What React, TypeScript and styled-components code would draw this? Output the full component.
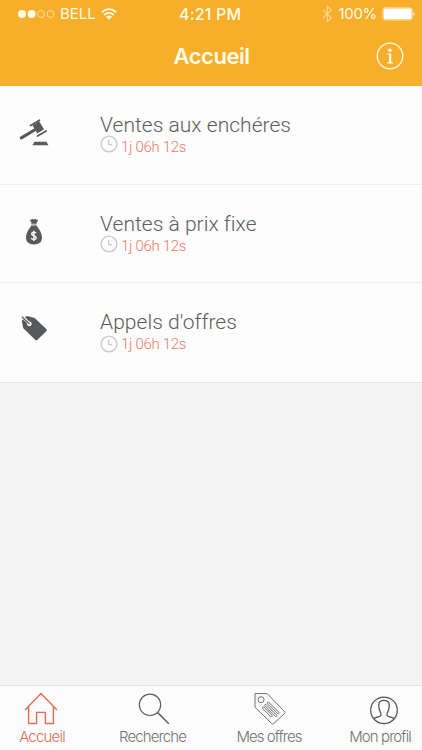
import React from 'react';
import styled, { createGlobalStyle } from 'styled-components';

const GlobalStyle = createGlobalStyle`
  * { box-sizing: border-box; }
  body { margin: 0; background: #f4f4f4; }
  svg { display: block; }
`;

const Screen = styled.div`
  width: 422px;
  height: 750px;
  display: flex;
  flex-direction: column;
  overflow: hidden;
  background: #f4f4f4;
  font-family: Roboto, sans-serif;
`;

const Header = styled.header`
  height: 86px;
  flex: none;
  background: #f6ae2b;
  color: #fffbe6;
  font-family: Inter, "Liberation Sans", sans-serif;
`;

const StatusBar = styled.div`
  height: 28px;
  display: grid;
  grid-template-columns: 1fr 64px 1fr;
  align-items: center;
  padding: 0 6px 0 18px;
  font-size: 15px;
  line-height: 28px;
  white-space: nowrap;
`;

const StatusGroup = styled.div<{ $end?: boolean }>`
  display: flex;
  align-items: center;
  justify-content: ${p => (p.$end ? 'flex-end' : 'flex-start')};
  gap: 5px;
`;

const StatusText = styled.span<{ $spacing: number; $weight?: number }>`
  letter-spacing: ${p => p.$spacing}px;
  font-weight: ${p => p.$weight ?? 400};
`;

const StatusTime = styled(StatusText)`
  margin-left: -6px;
  font-size: 16px;
`;

const TitleBar = styled.div`
  height: 58px;
  display: grid;
  grid-template-columns: 1fr auto 1fr;
  align-items: center;
  padding: 0 18px 2px 19px;
`;

const Title = styled.h1`
  grid-column: 2;
  margin: 0;
  font: 600 22px/28px Inter, "Liberation Sans", sans-serif;
  letter-spacing: -0.45px;
`;

const InfoButton = styled.button`
  justify-self: end;
  padding: 0;
  border: 0;
  background: none;
  color: inherit;
`;

const List = styled.main`
  flex: 1;
`;

const Row = styled.article<{ $height: number }>`
  height: ${p => p.$height}px;
  padding-top: 27px;
  display: grid;
  grid-template-columns: 100px 1fr;
  background: #fdfdfd;
  border-bottom: 1px solid #f0f0f0;
  &:last-child { border-color: #e6e6e6; }
`;

const RowIcon = styled.div<{ $top: number }>`
  color: #58595b;
  padding: ${p => p.$top}px 0 0 16px;
`;

const RowTitle = styled.h2`
  margin: 0;
  font-size: 21px;
  font-weight: 300;
  line-height: 24px;
  letter-spacing: 0.03px;
  color: #5c5c5c;
`;

const Remaining = styled.div`
  display: flex;
  gap: 3px;
  height: 18px;
  color: #ea7c67;
  font-size: 15px;
  font-weight: 350;
  letter-spacing: -0.32px;
  line-height: 18px;
`;

const Duration = styled.span<{ $top: number }>`
  margin-top: ${p => p.$top}px;
`;

const ClockSlot = styled.span<{ $top: number }>`
  margin-top: ${p => p.$top}px;
`;

const TabBar = styled.nav`
  height: 65px;
  flex: none;
  display: grid;
  grid-template-columns: 84px 137px 96px 105px;
  background: #fcfcfc;
  border-top: 1px solid #e4e4e4;
`;

const Tab = styled.button<{ $active?: boolean; $spacing: number; $nudge: number }>`
  display: flex;
  flex-direction: column;
  align-items: center;
  border: 0;
  padding: 4px 0 0 ${p => p.$nudge}px;
  background: none;
  color: ${p => (p.$active ? '#e26d56' : '#747474')};
  font: 300 15px/18px Inter, "Liberation Sans", sans-serif;
  letter-spacing: ${p => p.$spacing}px;
  white-space: nowrap;
`;

const TabIcon = styled.span<{ $offset: number }>`
  height: 38px;
  padding-left: ${p => Math.max(0, p.$offset) * 2}px;
  padding-right: ${p => Math.max(0, -p.$offset) * 2}px;
`;

const Signal = () => (
  <svg width="37" height="10" viewBox="0 0 37 10" fill="none" stroke="#fffbe6">
    <circle cx="4" cy="5" r="4" fill="#fffbe6" stroke="none" />
    <circle cx="13.6" cy="5" r="4" fill="#fffbe6" stroke="none" />
    <circle cx="23" cy="5" r="3.5" strokeWidth="0.8" opacity="0.8" />
    <circle cx="32.5" cy="5" r="3.5" strokeWidth="0.8" opacity="0.8" />
  </svg>
);

const Wifi = () => (
  <svg width="16" height="12" viewBox="0 0 16 12" fill="none" stroke="#fffbe6" strokeWidth="1.8">
    <path d="M.8 4.3Q8-2 15.2 4.3M3.2 7Q8 2.8 12.8 7" />
    <path d="M5 8.7Q8 6.4 11 8.7L8 11.8Z" fill="#fffbe6" stroke="none" />
  </svg>
);

const Bluetooth = () => (
  <svg width="11" height="18" viewBox="0 0 11 18" fill="none" stroke="#fffbe6" strokeWidth="1.1" opacity="0.55">
    <path d="M1 5L9.3 13 5.4 16.6V1.4L9.3 5 1 13" />
  </svg>
);

const Battery = () => (
  <svg width="34" height="14" viewBox="0 0 34 14" fill="none">
    <rect x=".8" y=".8" width="29.5" height="12.2" rx="2.4" stroke="#fffbe6" strokeWidth=".8" opacity=".75" />
    <rect x="1.6" y="1.6" width="28" height="10.6" rx="1.6" fill="#fff" />
    <path d="M31.5 4.8Q34.2 6.9 31.5 9Z" fill="#fffbe6" />
  </svg>
);

const InfoIcon = () => (
  <svg width="28" height="28" viewBox="0 0 28 28" fill="none" stroke="currentColor">
    <circle cx="14" cy="14" r="12.8" strokeWidth="1.3" />
    <circle cx="13.9" cy="8.2" r="1.8" fill="currentColor" stroke="none" />
    <path d="M11.5 12H14.1V20.5M11.2 20.8H17" strokeWidth="1.2" />
    <path d="M14.2 11.5V21" strokeWidth="2.1" />
  </svg>
);

const Clock = () => (
  <svg width="18" height="18" viewBox="0 0 18 18" fill="none" stroke="#c7c9cf">
    <circle cx="9" cy="9" r="7.9" strokeWidth="1.4" />
    <path d="M8.7 5V9.6H12" strokeWidth="1.2" />
  </svg>
);

const Gavel = () => (
  <svg width="36" height="32" viewBox="0 0 36 32" fill="currentColor">
    <path d="M16.6 8.4L23.1 4.3 28 12.3 21.3 16.5Z" />
    <path d="M14.6 8.6L23.5 3.3M21.5 19L30.2 14" stroke="currentColor" strokeWidth="1.8" strokeLinecap="round" />
    <path d="M18.5 13L5.4 20.9" stroke="currentColor" strokeWidth="3.2" strokeLinecap="round" />
    <path d="M18.6 24.7H30.4L32.5 28.2H16.3Z" />
  </svg>
);

const MoneyBag = () => (
  <svg width="36" height="32" viewBox="0 0 36 32" fill="currentColor">
    <path d="M13.5 3.2Q15.2 4.4 16.4 2.8 17.8 4.2 19.4 2.8 20.4 4.3 22.4 3.4L20.6 7H15.6Z" />
    <path d="M15.2 7.5H20.7M15.2 9H20.7" stroke="currentColor" strokeWidth=".8" />
    <path d="M15.3 9.8H20.7C23.2 13.2 26 17 26 21.5C26 26.6 22.5 28.4 18 28.4S10 26.6 10 21.5C10 17 13 13 15.3 9.8Z" />
    <path d="M20.1 17.1C18.6 15.4 15.5 16.1 15.7 18.1C15.9 20 20.2 19.1 20.2 21.7C20.2 23.7 16.8 24 15.1 22.2M17.9 14.7V25" fill="none" stroke="#fdfdfd" strokeWidth="1.4" />
  </svg>
);

const SolidTag = () => (
  <svg width="36" height="32" viewBox="0 0 36 32" fill="currentColor">
    <path d="M8.2 4.2Q10.5 2.4 15.8 4.2L18.7 4.9 30.5 16.2Q31.4 17.1 30.5 18L21.2 27Q20.3 27.8 19.4 27L7.3 15.2 5.8 8.2Z" />
    <path d="M6.3 3.6L12.6 9.8" stroke="#fdfdfd" strokeWidth="2.8" />
    <circle cx="13.3" cy="10.8" r="2.4" fill="#fdfdfd" />
    <path d="M5.9 3.7L13.5 11" stroke="currentColor" strokeWidth="1.2" />
  </svg>
);

const House = () => (
  <svg width="34" height="36" viewBox="0 0 34 36" fill="none" stroke="currentColor" strokeWidth="1.4">
    <path d="M1 20L17 3.5 33 20M4.6 17V33.5H12.6V22.4H21.4V33.5H29.4V17" />
  </svg>
);

const Magnifier = () => (
  <svg width="34" height="36" viewBox="0 0 34 36" fill="none" stroke="#606060" strokeWidth="1.2">
    <circle cx="13" cy="14.8" r="10.7" />
    <path d="M20.5 22.4L31.8 33.7" strokeWidth="1.5" />
  </svg>
);

const OutlineTag = () => (
  <svg width="34" height="36" viewBox="0 0 34 36" fill="none" stroke="#737373" strokeWidth="1">
    <path d="M2 3.6H14.2L31.7 21.8Q32.5 22.6 31.7 23.4L20.7 33.6Q19.7 34.5 18.7 33.6L2 17.2Z" />
    <circle cx="8.1" cy="9.7" r="3" />
    <g strokeWidth="2.6" strokeLinecap="round">
      <path d="M15.1 12.8L25.2 22.9M12.6 15.3L23.1 25.8M10.4 18L18.3 25.9" />
      <path d="M15.1 12.8L25.2 22.9M12.6 15.3L23.1 25.8M10.4 18L18.3 25.9" stroke="#fcfcfc" strokeWidth="1.1" />
    </g>
  </svg>
);

const Profile = () => (
  <svg width="34" height="36" viewBox="0 0 34 36" fill="none" stroke="#555" strokeWidth="1.25">
    <circle cx="17" cy="20.3" r="13.3" />
    <path d="M6.6 28.6C9 26.8 13.8 27.2 14.1 24.9C14.3 22.8 11.7 20.5 11.7 15.5C11.7 11.9 13.5 10.3 17 10.3S22.3 11.9 22.3 15.5C22.3 20.5 19.7 22.8 19.9 24.9C20.2 27.2 25 26.8 27.4 28.6" />
  </svg>
);

const sales = [
  { title: 'Ventes aux enchéres', Icon: Gavel, height: 99, iconTop: 4, clockTop: -2, textTop: 1 },
  { title: 'Ventes à prix fixe', Icon: MoneyBag, height: 98, iconTop: 4, clockTop: -1, textTop: 1 },
  { title: "Appels d'offres", Icon: SolidTag, height: 100, iconTop: 3, clockTop: 1, textTop: 1 },
];

const tabs = [
  { label: 'Accueil', Icon: House, spacing: -0.8, active: true, nudge: 0, offset: -1 },
  { label: 'Recherche', Icon: Magnifier, spacing: -0.88, nudge: 0, offset: 1 },
  { label: 'Mes offres', Icon: OutlineTag, spacing: -0.95, nudge: 0, offset: 0.5 },
  { label: 'Mon profil', Icon: Profile, spacing: -0.9, nudge: 21, offset: 3.5 },
];

export default function App() {
  return (
    <>
      <GlobalStyle />
      <Screen>
        <Header>
          <StatusBar>
            <StatusGroup>
              <Signal />
              <StatusText $spacing={0}>BELL</StatusText>
              <Wifi />
            </StatusGroup>
            <StatusTime $spacing={0.2} $weight={500}>4:21 PM</StatusTime>
            <StatusGroup $end>
              <Bluetooth />
              <StatusText $spacing={-0.3}>100%</StatusText>
              <Battery />
            </StatusGroup>
          </StatusBar>
          <TitleBar>
            <Title>Accueil</Title>
            <InfoButton aria-label="Informations"><InfoIcon /></InfoButton>
          </TitleBar>
        </Header>
        <List>
          {sales.map(({ title, Icon, height, iconTop, clockTop, textTop }) => (
            <Row key={title} $height={height}>
              <RowIcon $top={iconTop}><Icon /></RowIcon>
              <div>
                <RowTitle>{title}</RowTitle>
                <Remaining>
                  <ClockSlot $top={clockTop}><Clock /></ClockSlot>
                  <Duration $top={textTop}>1j 06h 12s</Duration>
                </Remaining>
              </div>
            </Row>
          ))}
        </List>
        <TabBar>
          {tabs.map(({ label, Icon, spacing, active, nudge, offset }) => (
            <Tab key={label} $active={active} $spacing={spacing} $nudge={nudge}>
              <TabIcon $offset={offset}><Icon /></TabIcon>
              {label}
            </Tab>
          ))}
        </TabBar>
      </Screen>
    </>
  );
}
